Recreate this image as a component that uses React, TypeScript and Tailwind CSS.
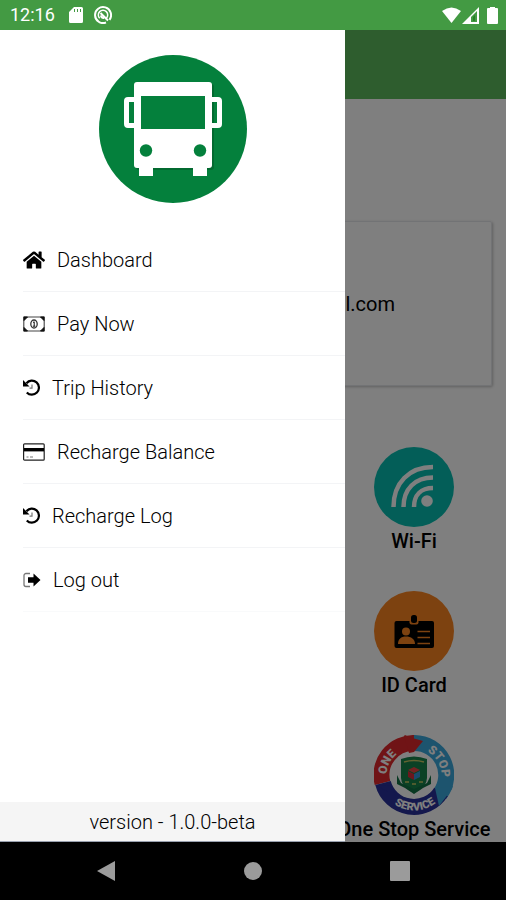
import React from 'react';
import { FaHome } from 'react-icons/fa';

interface MenuItem {
  label: string;
  icon: React.ReactNode;
}

const BusLogo = () => (
  <svg viewBox="0 0 148 148" className="w-37 h-37" aria-hidden="true">
    <circle cx="74" cy="74" r="74" fill="#04803c" />
    <rect x="37" y="29" width="78" height="86" rx="3" fill="#036a30" />
    <rect x="35" y="27" width="78" height="86" rx="3" fill="#fff" />
    <rect x="42" y="41" width="64" height="33" fill="#04803c" />
    <circle cx="47" cy="95.5" r="6.2" fill="#04803c" />
    <circle cx="101" cy="95.5" r="6.2" fill="#04803c" />
    <path d="M40 112h14v9H40zM94 112h14v9H94z" fill="#fff" />
    <path
      d="M35 42h-6a4 4 0 0 0-4 4v23a4 4 0 0 0 4 4h6v-5h-5V47h5zM113 42h6a4 4 0 0 1 4 4v23a4 4 0 0 1-4 4h-6v-5h5V47h-5z"
      fill="#fff"
    />
  </svg>
);

const CashIcon = () => (
  <svg viewBox="0 0 22 16" width="22" height="16" fill="none" stroke="#111">
    <path d="M.8 1h20.4v14H.8z" stroke="#444" strokeWidth="1.1" />
    <path d="M1 1h3.500L1 4.500zM21 1h-3.500L21 4.500zM1 15h3.500L1 11.500zM21 15h-3.500l3.500-3.500z" fill="#111" />
    <ellipse cx="11" cy="8" rx="3.200" ry="4" stroke="#333" strokeWidth="1.300" />
    <path d="M10 6.500l1.200-.7v4.400M9.800 10.200h2.600" />
  </svg>
);

const HistoryIcon = () => (
  <svg viewBox="0 0 17 17" width="17" height="17" fill="none">
    <path d="M3.500 4.200A7 7 0 1 1 3.800 13.400" stroke="#000" strokeWidth="2.200" />
    <path d="M0 1v6.500h6.500z" fill="#000" />
    <path d="M9 5.500v3.700H6.500" stroke="#777" strokeWidth="1.200" />
  </svg>
);

const CardIcon = () => (
  <svg viewBox="0 0 22 18" width="22" height="18" fill="none" stroke="#222">
    <rect x=".6" y=".8" width="20.6" height="16.4" rx="1" strokeWidth="1.2" />
    <path d="M1 6.7h20" stroke="#000" strokeWidth="3.4" />
    <path d="M3.500 14h2M7 14h3" stroke="#777" />
  </svg>
);

const LogoutIcon = () => (
  <svg viewBox="0 0 18 16" width="18" height="16" fill="none">
    <path d="M7 1.500H3a2 2 0 0 0-2 2v9a2 2 0 0 0 2 2h4" stroke="#777" strokeWidth="1.300" />
    <path d="M5 5.300h5.500V1.500L17.500 8l-7 6.500v-3.800H5z" fill="#000" />
  </svg>
);

const menuItems: MenuItem[] = [
  { label: 'Dashboard', icon: <FaHome size={22} /> },
  { label: 'Pay Now', icon: <CashIcon /> },
  { label: 'Trip History', icon: <HistoryIcon /> },
  { label: 'Recharge Balance', icon: <CardIcon /> },
  { label: 'Recharge Log', icon: <HistoryIcon /> },
  { label: 'Log out', icon: <LogoutIcon /> },
];

const WifiBadge = () => (
  <svg viewBox="0 0 80 80" className="w-20 h-20" aria-hidden="true">
    <circle cx="40" cy="40" r="40" fill="#06bdb0" />
    <g fill="none" stroke="#fff" strokeWidth="4.5">
      <path d="M19.500 60c0-24 15.500-40 39.500-40" />
      <path d="M29.500 60c0-18 11.500-29.500 29.500-29.500" />
      <path d="M40 60c0-12 7-19 19-19" />
    </g>
    <circle cx="53" cy="54" r="5.800" fill="#fff" />
  </svg>
);

const IdCardBadge = () => (
  <svg viewBox="0 0 80 80" className="w-20 h-20" aria-hidden="true">
    <circle cx="40" cy="40" r="40" fill="#fb8420" />
    <rect x="20.500" y="30" width="39.500" height="27" rx="2" fill="#000" />
    <path d="M35.500 29h9v2.500a2 2 0 0 1-2 2h-5a2 2 0 0 1-2-2z" fill="#fb8420" />
    <rect x="37" y="24" width="6" height="8" rx="2.500" fill="#000" />
    <circle cx="32" cy="40.500" r="4" fill="#fb8420" />
    <path d="M24 53c0-5 3-7.500 8-7.500s9 2.500 9 7.500z" fill="#fb8420" />
    <path d="M43.500 40.500H56M43.500 46.500H56M43.500 52.500H56" stroke="#fb8420" strokeWidth="1.600" />
  </svg>
);

const OneStopBadge = () => (
  <svg viewBox="0 0 80 80" className="w-20 h-20" aria-hidden="true">
    <defs>
      <path id="ring-top" d="M13.500 48a27.500 27.500 0 1 1 53 0" />
      <path id="ring-bottom" d="M4.500 40a35.500 35.500 0 0 0 71 0" />
    </defs>
    <circle cx="40" cy="40" r="24" fill="#fff" />
    <g fill="none" strokeWidth="16">
      <path d="M8.500 48A32 32 0 0 1 40 8" stroke="#e0282c" />
      <path d="M40 8a32 32 0 0 1 26 51" stroke="#3ba9dc" />
      <path d="M67 57a32 32 0 0 1-58-9" stroke="#28309a" />
    </g>
    <path d="M30 1l1-1 4 2 14 4-9 11-5 1z" fill="#e0282c" />
    <path d="M2 50l14 1 6 10-8-4z" fill="#28309a" />
    <path d="M79 51l-1 3-13 17-4-18z" fill="#3ba9dc" />
    <g
      fill="#fff"
      fontFamily="Roboto, sans-serif"
      fontWeight="900"
      fontSize="12"
      textAnchor="middle"
    >
      <text>
        <textPath href="#ring-top" startOffset="20%">ONE</textPath>
      </text>
      <text>
        <textPath href="#ring-top" startOffset="79%">STOP</textPath>
      </text>
      <text fontSize="11">
        <textPath href="#ring-bottom" startOffset="51%">SERVICE</textPath>
      </text>
    </g>
    <path d="M27 24q13-5 26 0v19q0 9-13 15-13-6-13-15z" fill="#16834b" />
    <path d="M23 40v9l8 4 9 6 9-6 8-4v-9l-4 8-13 6-13-6z" fill="#117044" />
    <path d="M34 35l6-3 6 3-6 3z" fill="#ed4545" />
    <path d="M34 36l6 3v6l-6-3z" fill="#d92e3b" />
    <path d="M46 36l-6 3v6l6-3z" fill="#3497d8" />
    <path d="M30 27q10-3 20 0M31 47h4M38 49h4M45 47h4" fill="none" stroke="#c9c763" strokeWidth="1.500" />
  </svg>
);

const services = [
  { label: 'Wi-Fi', badge: <WifiBadge /> },
  { label: 'ID Card', badge: <IdCardBadge /> },
  { label: 'One Stop Service', badge: <OneStopBadge /> },
];

const StatusBar = () => (
  <div className="h-[30px] shrink-0 bg-[#439a43] text-white flex items-center justify-between pl-[10px] pr-2">
    <div className="flex items-center">
      <span className="text-[18px] leading-6">12:16</span>
      <svg viewBox="0 0 14 16" width="14" height="16" className="ml-[14px]">
        <path d="M5 0h7.500A1.500 1.500 0 0 1 14 1.500v13a1.500 1.500 0 0 1-1.500 1.500h-11A1.500 1.500 0 0 1 0 14.500V5z" fill="#fff" />
        <path d="M5.500 2v3M8.500 2v3M11.500 2v3" stroke="#439a43" />
      </svg>
      <svg viewBox="0 0 18 18" width="18" height="18" fill="none" stroke="#fff" className="ml-[11px]">
        <path d="M15.500 13.800A8 8 0 1 0 12 16.500" strokeWidth="2" />
        <path d="M12.300 12.300a4.700 4.700 0 1 0-6.600 0" strokeWidth="1.500" />
        <path d="M6.500 7l7.500 7.500M7 9.500a2.500 2.500 0 0 0 3 2.500" strokeWidth="2" />
      </svg>
    </div>
    <div className="flex items-center">
      <svg viewBox="0 0 19 16" width="19" height="16">
        <path d="M0 4q9.500-7 19 0L9.500 16z" fill="#fff" />
      </svg>
      <svg viewBox="0 0 17 17" width="17" height="17" className="ml-px">
        <path d="M0 17L17 0v17z" fill="#fff" />
        <path d="M9 15V10l6-6v11z" fill="#439a43" />
        <path d="M11 14v-4l2-2v6z" fill="#258225" />
      </svg>
      <svg viewBox="0 0 11 17" width="11" height="17" className="ml-2">
        <path d="M3 0h5v1h2a1 1 0 0 1 1 1v14a1 1 0 0 1-1 1H1a1 1 0 0 1-1-1V2a1 1 0 0 1 1-1h2z" fill="#fff" />
      </svg>
    </div>
  </div>
);

const HomeScreen = () => (
  <div className="h-full bg-white">
    <header className="h-[69px] bg-[#5cba5c]" />
    <section className="mt-[122px] mx-[14px] h-[165px] rounded-xs border border-gray-200 shadow-[1px_1px_3px_rgba(0,0,0,0.25)] flex items-center justify-end pr-24">
      <p className="text-[20px] leading-6">l.com</p>
    </section>
    <section className="mt-[61px] ml-[14px] mr-3 grid grid-cols-3 gap-y-9">
      {services.map((service) => (
        <a key={service.label} href="#" className="col-start-3 flex flex-col items-center">
          {service.badge}
          <span className="text-[20px] leading-7 font-medium whitespace-nowrap">{service.label}</span>
        </a>
      ))}
    </section>
  </div>
);

const Drawer = () => (
  <aside className="absolute inset-y-0 left-0 w-[68.2%] bg-white flex flex-col">
    <div className="pt-[25px] pb-[25px] flex justify-center">
      <BusLogo />
    </div>
    <nav className="pl-[23px]">
      {menuItems.map((item) => (
        <a
          key={item.label}
          href="#"
          className="h-16 flex items-center gap-3 border-b border-gray-100 last:border-gray-50 text-[20px] leading-6 font-light text-black"
        >
          {item.icon}
          {item.label}
        </a>
      ))}
    </nav>
    <footer className="mt-auto h-10 bg-[#f5f5f5] border-b border-gray-400 flex items-center justify-center text-[20px] leading-6 font-light text-black">
      version - 1.0.0-beta
    </footer>
  </aside>
);

const NavigationBar = () => (
  <div className="h-[58px] shrink-0 bg-black px-8 grid grid-cols-3 items-center justify-items-center">
    <button aria-label="Back">
      <svg viewBox="0 0 20 20" width="20" height="20" fill="#9b9b9b">
        <path d="M19 0v20L1 10z" />
      </svg>
    </button>
    <button aria-label="Home">
      <svg viewBox="0 0 20 20" width="20" height="20" fill="#9b9b9b">
        <circle cx="10" cy="10" r="9" />
      </svg>
    </button>
    <button aria-label="Recent apps">
      <svg viewBox="0 0 20 20" width="20" height="20" fill="#9b9b9b">
        <rect width="20" height="20" rx="1" />
      </svg>
    </button>
  </div>
);

export default function App() {
  return (
    <div className="h-screen flex flex-col font-[Roboto,sans-serif] text-black">
      <StatusBar />
      <main className="relative flex-1 min-h-0 overflow-hidden">
        <HomeScreen />
        <div className="absolute inset-0 bg-black/50" />
        <Drawer />
      </main>
      <NavigationBar />
    </div>
  );
}
